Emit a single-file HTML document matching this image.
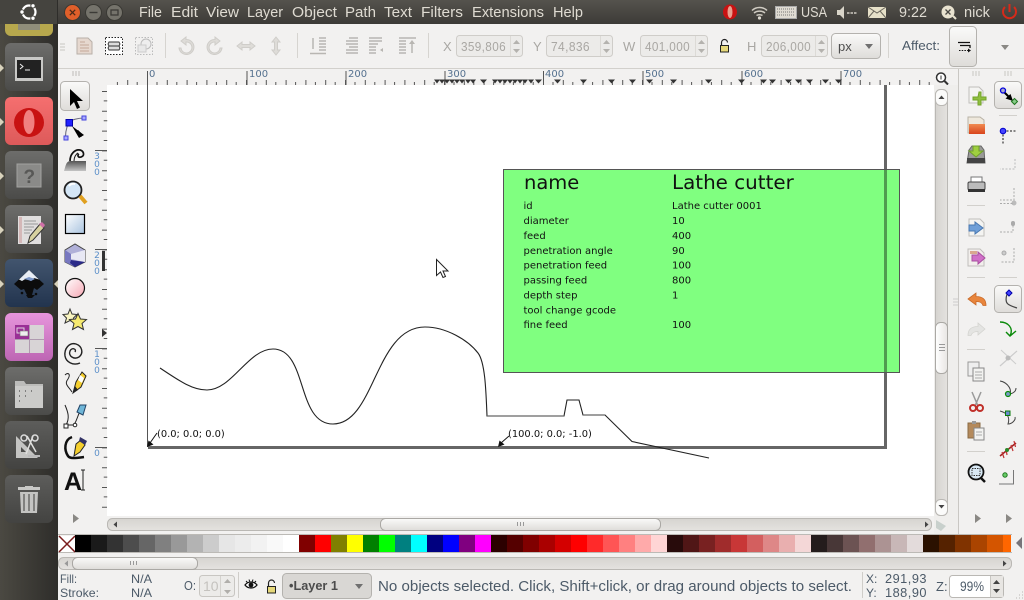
<!DOCTYPE html>
<html><head><meta charset="utf-8"><title>Inkscape</title>
<style>
html,body{margin:0;padding:0;background:#f2f1f0;width:1024px;height:600px;overflow:hidden}
svg{display:block;position:absolute;left:0;top:0}
text{font-family:"Liberation Sans",sans-serif}
.m{fill:#dfdbd2;font-size:15px}
text.d,.d text{font-family:"DejaVu Sans",sans-serif;fill:#111}
.g{fill:#a9a7a3;font-size:13px}
.s{fill:#4c5a68;font-size:14px}
text.r,.r text{fill:#55718f;font-size:10px;font-family:"DejaVu Sans",sans-serif}
text.v,.v text{fill:#5b8fc9;font-size:9px;font-family:"DejaVu Sans",sans-serif;text-anchor:middle}
</style></head><body>
<svg width="1024" height="600" viewBox="0 0 1024 600" xmlns="http://www.w3.org/2000/svg">
<defs>
<linearGradient id="p" x1="0" y1="0" x2="0" y2="1"><stop offset="0" stop-color="#55534d"/><stop offset="1" stop-color="#3c3b37"/></linearGradient>
<linearGradient id="l" x1="0" y1="0" x2="1" y2="0"><stop offset="0" stop-color="#4b4942"/><stop offset="1" stop-color="#2e2d2a"/></linearGradient>
<linearGradient id="t" x1="0" y1="0" x2="0" y2="1"><stop offset="0" stop-color="#6d6d6b"/><stop offset="1" stop-color="#4b4b49"/></linearGradient>
<linearGradient id="t2" x1="0" y1="0" x2="0" y2="1"><stop offset="0" stop-color="#5d5d5b"/><stop offset="1" stop-color="#434341"/></linearGradient>
<linearGradient id="red" x1="0" y1="0" x2="0" y2="1"><stop offset="0" stop-color="#f56f6f"/><stop offset="1" stop-color="#dd5a5a"/></linearGradient>
<linearGradient id="ink" x1="0" y1="0" x2="0" y2="1"><stop offset="0" stop-color="#42556e"/><stop offset="1" stop-color="#22344e"/></linearGradient>
<linearGradient id="pk" x1="0" y1="0" x2="0" y2="1"><stop offset="0" stop-color="#e795dc"/><stop offset="1" stop-color="#bd66b3"/></linearGradient>
<linearGradient id="b" x1="0" y1="0" x2="0" y2="1"><stop offset="0" stop-color="#fafaf9"/><stop offset="1" stop-color="#dedcd9"/></linearGradient>
<linearGradient id="tr" x1="0" y1="0" x2="0" y2="1"><stop offset="0" stop-color="#d6d4d0"/><stop offset="1" stop-color="#e4e2df"/></linearGradient>
<linearGradient id="tv" x1="0" y1="0" x2="1" y2="0"><stop offset="0" stop-color="#d6d4d0"/><stop offset="1" stop-color="#e4e2df"/></linearGradient>
<linearGradient id="th" x1="0" y1="0" x2="1" y2="0"><stop offset="0" stop-color="#fff"/><stop offset="1" stop-color="#e8e6e3"/></linearGradient>
<linearGradient id="rc" x1="0" y1="0" x2="1" y2="1"><stop offset="0" stop-color="#fff"/><stop offset="1" stop-color="#a9c3df"/></linearGradient>
<linearGradient id="ci" x1="0" y1="0" x2="1" y2="1"><stop offset="0" stop-color="#fff"/><stop offset="1" stop-color="#f7a8b4"/></linearGradient>
<linearGradient id="fo" x1="0" y1="0" x2="0" y2="1"><stop offset="0" stop-color="#f08a50"/><stop offset="1" stop-color="#d8441c"/></linearGradient>
<linearGradient id="wv" x1="0" y1="0" x2="0" y2="1"><stop offset="0" stop-color="#555"/><stop offset="1" stop-color="#c4c4c4"/></linearGradient>
</defs>

<!-- app background -->
<rect x="58" y="24" width="966" height="576" fill="#f2f1f0"/>

<!-- canvas -->
<rect x="107" y="85" width="827" height="431" fill="#fff"/>
<!-- page border -->
<path d="M147.500 85V447" stroke="#555" stroke-width="1" fill="none"/>
<path d="M148 447.500H887" stroke="#666" stroke-width="3" fill="none"/>
<path d="M885.500 85V449" stroke="#666" stroke-width="3" fill="none"/>
<!-- green rect -->
<rect x="503.500" y="169.500" width="396" height="203" fill="#80ff80" stroke="#555" stroke-width="1"/>
<path d="M885.500 170V372" stroke="#4f9c4f" stroke-width="3" fill="none"/>
<text class="d" x="524" y="189" font-size="19.500">name</text>
<text class="d" x="672" y="189" font-size="19.900">Lathe cutter</text>
<g class="d" font-size="10">
<text x="523.500" y="209">id</text><text x="672" y="209">Lathe cutter 0001</text>
<text x="523.500" y="224">diameter</text><text x="672" y="224">10</text>
<text x="523.500" y="239">feed</text><text x="672" y="239">400</text>
<text x="523.500" y="254">penetration angle</text><text x="672" y="254">90</text>
<text x="523.500" y="268.500">penetration feed</text><text x="672" y="268.500">100</text>
<text x="523.500" y="283.500">passing feed</text><text x="672" y="283.500">800</text>
<text x="523.500" y="298.500">depth step</text><text x="672" y="298.500">1</text>
<text x="523.500" y="313.500">tool change gcode</text>
<text x="523.500" y="328">fine feed</text><text x="672" y="328">100</text>
</g>
<!-- curve -->
<path d="M160 368C178 380 192 390 207 390C232 390 248 349 273 349C308 349 296 424 333 424C375 424 375 327 425 327C446 327 468 340 478 353C485 362 486 390 487 416L564 416L567 400L579 400L583 415L605 415L632 441.500L709 458" fill="none" stroke="#222" stroke-width="1.100"/>
<path d="M487 416H564M583 415H605" fill="none" stroke="#666" stroke-width="1.300"/>
<!-- labels -->
<text class="d" x="157" y="437" font-size="9.900">(0.0; 0.0; 0.0)</text>
<text class="d" x="508" y="437" font-size="9.900">(100.0; 0.0; -1.0)</text>
<path d="M157 433L150 443" stroke="#111" fill="none"/><path d="M147 447L148.500 440.500L153.500 444.500Z" fill="#111"/>
<path d="M509 436L501 443" stroke="#111" fill="none"/><path d="M498 447L499.500 440.500L504.500 444.500Z" fill="#111"/>
<!-- mouse cursor -->
<path d="M436.500 259.500V275.500L440.500 272L443 277.500L445.500 276.500L443 271H448Z" fill="#fff" stroke="#222" stroke-width="1"/>

<!-- top ruler -->
<rect x="58" y="69" width="876" height="16" fill="#f2f1f0"/>
<path d="M58 68.500H1024" stroke="#d2d0cc"/>
<path d="M107.500 83.500H934" stroke="#555" stroke-width="3" stroke-dasharray="1 18.800" stroke-dashoffset="-9.400" fill="none"/>
<path d="M127.200 82.500H934" stroke="#555" stroke-width="5" stroke-dasharray="1 18.800" fill="none"/>
<path d="M147.500 71V85M247 71V85M346 71V85M445 71V85M543.500 71V85M643 71V85M742 71V85M841 71V85" stroke="#555" fill="none"/>
<g class="r"><text x="149" y="77">0</text><text x="249" y="77">100</text><text x="348" y="77">200</text><text x="447" y="77">300</text><text x="545" y="77">400</text><text x="645" y="77">500</text><text x="744" y="77">600</text><text x="843" y="77">700</text></g>
<path fill="#333" d="M434 79.500h6l-3 4zM439 79.500h6l-3 4zM444 79.500h6l-3 4zM449 79.500h6l-3 4zM454 79.500h6l-3 4zM459 79.500h6l-3 4zM465 79.500h6l-3 4zM470 79.500h6l-3 4zM480 79.500h7l-3.500 4zM492 79.500h6l-3 4zM497 79.500h6l-3 4zM502 79.500h6l-3 4zM507 79.500h6l-3 4zM512 79.500h6l-3 4zM517 79.500h6l-3 4zM522 79.500h6l-3 4zM528 79.500h6l-3 4zM535 79.500h7l-3.500 4zM554 79.500h7l-3.500 4zM580 79.500h7l-3.500 4zM608 79.500h7l-3.500 4zM629 79.500h7l-3.500 4zM646 79.500h7l-3.500 4zM670 79.500h7l-3.500 4zM705 79.500h7l-3.500 4zM738 79.500h7l-3.500 4zM760 79.500h7l-3.500 4zM769 79.500h7l-3.500 4zM785 79.500h7l-3.500 4zM795 79.500h7l-3.500 4zM806 79.500h7l-3.500 4zM822 79.500h7l-3.500 4zM835 79.500h7l-3.500 4z"/>
<!-- magnifier small -->
<circle cx="941" cy="77.500" r="4.500" fill="#fff" stroke="#333" stroke-width="1.500"/><path d="M941 75.500V79.500" stroke="#333"/><path d="M944.500 81L948 84.500" stroke="#333" stroke-width="2"/>

<!-- left ruler -->
<path d="M105 91V516" stroke="#555" stroke-width="3.500" stroke-dasharray="1 18.800" stroke-dashoffset="-9.400" fill="none" transform="translate(0.500 0)"/>
<path d="M104.500 91V516" stroke="#555" stroke-width="5" stroke-dasharray="1 18.800" fill="none"/>
<path d="M95 150.500H107M95 249.500H107M95 348.500H107M95 447.500H107" stroke="#555" fill="none"/>
<g class="v"><text x="97" y="159">3</text><text x="97" y="167">0</text><text x="97" y="175">0</text><text x="97" y="258">2</text><text x="97" y="266">0</text><text x="97" y="274">0</text><text x="97" y="357">1</text><text x="97" y="365">0</text><text x="97" y="373">0</text><text x="97" y="456">0</text></g>
<path d="M102 251h3v20h-3zM102 329l5 4l-5 4z" fill="#333"/>
<rect x="58" y="516" width="49" height="18" fill="#f2f1f0"/>

<!-- left toolbox -->
<path d="M73 71v5M76 71v5M79 71v5" stroke="#bdbbb7"/>
<rect x="60.500" y="81.500" width="29" height="29" rx="4" fill="url(#b)" stroke="#b4b2ae"/>
<path d="M70 89V106L74 102L77 109L80 107.500L77 101H83Z" fill="#000"/>
<!-- node -->
<path d="M69 122C71 120 78 118 84 118M69 122C66 128 65.500 134 65.500 137" fill="none" stroke="#667"/>
<rect x="66" y="119.500" width="6.500" height="6.500" fill="#22f" stroke="#00a"/><rect x="82" y="116" width="4" height="4" fill="#aaf" stroke="#44d"/><rect x="64" y="136" width="4" height="4" fill="#aaf" stroke="#44d"/>
<path d="M72 126L84 135L79 138Z" fill="#000"/><path d="M77 131L82 136" stroke="#000" stroke-width="3"/>
<!-- tweak -->
<path d="M64 171C66 165 66 161 71 161H86V171Z" fill="url(#wv)"/>
<path d="M70 161C70 154 75 149 80 150C84 151 85 156 81 157C78 158 77 155 79 154" fill="none" stroke="#111" stroke-width="1.700"/><path d="M74 161C74 157 76 154 78 153" fill="none" stroke="#111" stroke-width="1"/>
<!-- zoom -->
<circle cx="73" cy="190" r="8.500" fill="#d4e6f6" stroke="#222" stroke-width="1.800"/><path d="M69 186a6 6 0 0 1 6 -2" stroke="#fff" fill="none" stroke-width="2"/><path d="M80 196L86 203" stroke="#e0a020" stroke-width="4"/>
<!-- rect -->
<rect x="65.500" y="214.500" width="19" height="19" fill="url(#rc)" stroke="#000" stroke-width="1.200"/>
<!-- 3d box -->
<path d="M65 250L75 244L85 250V262L75 267L65 262Z" fill="#b0b0d8" stroke="#444"/><path d="M65 250L71 254V263L75 267L65 262Z" fill="#7878c0"/><path d="M71 260L85 262L75 267L70 263Z" fill="#2a2a88"/><path d="M71 254L85 250V262L71 259Z" fill="#e8e8f4"/>
<!-- circle -->
<circle cx="75" cy="288" r="9.500" fill="url(#ci)" stroke="#111" stroke-width="1.200"/>
<!-- star -->
<path d="M70 309L72 314L77 314.500L73.500 318L75 323L70 320.500L65 323L66.500 318L63 314.500L68 314Z" fill="#f8f4c0" stroke="#333"/>
<path d="M78 313.500L80.500 319L86.500 319.500L82 323.500L83.500 329.500L78 326.500L72.500 329.500L74 323.500L69.500 319.500L75.500 319Z" fill="#f6ea70" stroke="#333"/>
<!-- spiral -->
<path d="M75 352C77 349 72 347 70 351C68 356 74 360 79 357C84 353 82 346 76 344C69 342 64 349 65 356C66 362 73 366 80 363" fill="none" stroke="#222" stroke-width="1.400"/>
<!-- pencil -->
<path d="M65 375C68 372 71 374 68 379C64 384 68 386 72 392" fill="none" stroke="#222"/><path d="M73 393L76 382L82 372L86 376L81 387Z" fill="#f5cf2e" stroke="#222"/><path d="M73 393L75 386L78 390Z" fill="#222"/><path d="M80 375L84 378L82 383L78 380Z" fill="#fff"/>
<!-- pen -->
<path d="M65 405C68 412 70 418 66 425M68 425H74C78 418 78 414 80 412" fill="none" stroke="#222"/><rect x="64" y="424" width="4" height="4" fill="#fff" stroke="#222"/><circle cx="75" cy="425" r="1.800" fill="#fff" stroke="#222"/><path d="M77 412L80 405H86L83 415Z" fill="#6fb6d8" stroke="#246"/>
<!-- calligraphy -->
<path d="M72 437C64 440 64 450 68 456C70 459 76 458 84 457" fill="none" stroke="#111" stroke-width="2.500"/><path d="M74 456L76 444L81 440L85 445L80 452Z" fill="#f5cf2e" stroke="#222"/><path d="M80 437L87 441L85 445L79 441Z" fill="#336"/>
<!-- text -->
<text x="64" y="490" font-size="25" font-weight="bold" fill="#111">A</text><path d="M83 470V490M81 470h4M81 490h4" stroke="#222"/>
<path d="M73 514v9l6-4.500z" fill="#8a8884"/>

<!-- right scrollbar -->
<rect x="934" y="85" width="24" height="450" fill="#efeeec"/>
<rect x="935.500" y="89.500" width="12" height="426" rx="5" fill="url(#tv)" stroke="#bab8b4"/>
<rect x="935.500" y="89.500" width="12" height="16" rx="5" fill="#fbfbfa" stroke="#bab8b4"/>
<path d="M938.500 99h6l-3-3.500z" fill="#444"/>
<rect x="935.500" y="499.500" width="12" height="16" rx="5" fill="#fbfbfa" stroke="#bab8b4"/>
<path d="M938.500 505h6l-3 3.500z" fill="#444"/>
<rect x="935.500" y="322.500" width="12" height="51" rx="5" fill="url(#th)" stroke="#aaa8a4"/>
<path d="M939 344.500h6M939 347.500h6M939 350.500h6" stroke="#999"/>
<path d="M953 299h5M953 302h5M953 305h5" stroke="#ccc"/>
<path d="M958.500 69V535" stroke="#c9c7c3"/>

<!-- horizontal scroll -->
<rect x="107.500" y="518.500" width="824" height="12" rx="5" fill="url(#tr)" stroke="#bab8b4"/>
<path d="M117 521.500v6l-3.500-3z" fill="#444"/><path d="M925 521.500v6l3.500-3z" fill="#444"/>
<rect x="380.500" y="518.500" width="280" height="12" rx="5" fill="url(#b)" stroke="#aaa8a4"/>
<path d="M517.500 522v4M520.500 522v4M523.500 522v4" stroke="#999"/>
<path d="M936 520L946 526L941 531L936 528Z" fill="#c8d0cc"/>

<!-- palette -->
<path d="M58 534.500H1012M58 552.500H1012" stroke="#bcbab6"/>
<rect x="59" y="536" width="16" height="16" fill="#fff"/><path d="M59 536L75 552M75 536L59 552" stroke="#7a1c1c" stroke-width="1.500"/>
<g>
<rect x="75" y="535" width="16" height="17" fill="#000"/><rect x="91" y="535" width="16" height="17" fill="#1a1a1a"/><rect x="107" y="535" width="16" height="17" fill="#333"/><rect x="123" y="535" width="16" height="17" fill="#4d4d4d"/><rect x="139" y="535" width="16" height="17" fill="#666"/><rect x="155" y="535" width="16" height="17" fill="#808080"/><rect x="171" y="535" width="16" height="17" fill="#999"/><rect x="187" y="535" width="16" height="17" fill="#b3b3b3"/><rect x="203" y="535" width="16" height="17" fill="#ccc"/><rect x="219" y="535" width="16" height="17" fill="#e6e6e6"/><rect x="235" y="535" width="16" height="17" fill="#ececec"/><rect x="251" y="535" width="16" height="17" fill="#f2f2f2"/><rect x="267" y="535" width="16" height="17" fill="#f9f9f9"/><rect x="283" y="535" width="16" height="17" fill="#fff"/>
<rect x="299" y="535" width="16" height="17" fill="#800000"/><rect x="315" y="535" width="16" height="17" fill="#f00"/><rect x="331" y="535" width="16" height="17" fill="#808000"/><rect x="347" y="535" width="16" height="17" fill="#ff0"/><rect x="363" y="535" width="16" height="17" fill="#008000"/><rect x="379" y="535" width="16" height="17" fill="#0f0"/><rect x="395" y="535" width="16" height="17" fill="#008080"/><rect x="411" y="535" width="16" height="17" fill="#0ff"/><rect x="427" y="535" width="16" height="17" fill="#000080"/><rect x="443" y="535" width="16" height="17" fill="#00f"/><rect x="459" y="535" width="16" height="17" fill="#800080"/><rect x="475" y="535" width="16" height="17" fill="#f0f"/>
<rect x="491" y="535" width="16" height="17" fill="#2b0000"/><rect x="507" y="535" width="16" height="17" fill="#500"/><rect x="523" y="535" width="16" height="17" fill="#800000"/><rect x="539" y="535" width="16" height="17" fill="#a00"/><rect x="555" y="535" width="16" height="17" fill="#d40000"/><rect x="571" y="535" width="16" height="17" fill="#f00"/><rect x="587" y="535" width="16" height="17" fill="#ff2a2a"/><rect x="603" y="535" width="16" height="17" fill="#f55"/><rect x="619" y="535" width="16" height="17" fill="#ff8080"/><rect x="635" y="535" width="16" height="17" fill="#faa"/><rect x="651" y="535" width="16" height="17" fill="#ffd5d5"/>
<rect x="667" y="535" width="16" height="17" fill="#280b0b"/><rect x="683" y="535" width="16" height="17" fill="#501616"/><rect x="699" y="535" width="16" height="17" fill="#782121"/><rect x="715" y="535" width="16" height="17" fill="#a02c2c"/><rect x="731" y="535" width="16" height="17" fill="#c83737"/><rect x="747" y="535" width="16" height="17" fill="#d35f5f"/><rect x="763" y="535" width="16" height="17" fill="#de8787"/><rect x="779" y="535" width="16" height="17" fill="#e9afaf"/><rect x="795" y="535" width="16" height="17" fill="#f4d7d7"/>
<rect x="811" y="535" width="16" height="17" fill="#241c1c"/><rect x="827" y="535" width="16" height="17" fill="#483737"/><rect x="843" y="535" width="16" height="17" fill="#6c5353"/><rect x="859" y="535" width="16" height="17" fill="#916f6f"/><rect x="875" y="535" width="16" height="17" fill="#ac9393"/><rect x="891" y="535" width="16" height="17" fill="#c8b7b7"/><rect x="907" y="535" width="16" height="17" fill="#e3dbdb"/>
<rect x="923" y="535" width="16" height="17" fill="#2b1100"/><rect x="939" y="535" width="16" height="17" fill="#520"/><rect x="955" y="535" width="16" height="17" fill="#803300"/><rect x="971" y="535" width="16" height="17" fill="#a40"/><rect x="987" y="535" width="16" height="17" fill="#d45500"/><rect x="1003" y="535" width="8" height="17" fill="#f60"/>
</g>
<path d="M1022 537v12l-6-6z" fill="#77757a"/>
<!-- palette scroll -->
<rect x="58.500" y="557.500" width="953" height="12" rx="5" fill="url(#tr)" stroke="#bab8b4"/>
<path d="M68 560.500v6l-3.500-3z" fill="#999"/><path d="M1003 560.500v6l3.500-3z" fill="#444"/>
<rect x="72.500" y="557.500" width="125" height="12" rx="5" fill="url(#b)" stroke="#aaa8a4"/>
<path d="M130.500 561v4M133.500 561v4M136.500 561v4" stroke="#999"/>

<!-- status bar -->
<g class="s">
<text x="60" y="583" textLength="17" lengthAdjust="spacingAndGlyphs" style="font-size:12px">Fill:</text>
<text x="60" y="597" textLength="39" lengthAdjust="spacingAndGlyphs" style="font-size:12px">Stroke:</text>
<text x="131" y="583" textLength="21" lengthAdjust="spacingAndGlyphs" style="font-size:12px">N/A</text>
<text x="131" y="597" textLength="21" lengthAdjust="spacingAndGlyphs" style="font-size:12px">N/A</text>
<text x="184" y="590" textLength="12" lengthAdjust="spacingAndGlyphs" style="font-size:13px">O:</text>
</g>
<rect x="199.500" y="575.500" width="35" height="21" rx="3" fill="#ecebe9" stroke="#c8c6c2"/>
<path d="M220.500 576V596" stroke="#d4d2ce"/><text x="203" y="591" style="font-size:14px;fill:#c4c2be">10</text>
<path d="M224 583h7l-3.500-4zM224 590h7l-3.500 4z" fill="#b0aeaa"/>
<path d="M238.500 572V598" stroke="#cfcdc9"/>
<!-- eye -->
<path d="M245 585C248 581 254 581 257 585C254 589 248 589 245 585Z" fill="#fff" stroke="#111" stroke-width="1.300"/><circle cx="251" cy="585" r="2.400" fill="#111"/><path d="M246 581l1.500 1.500M249 579.500l.7 2M253 579.500l-.7 2M256 581l-1.500 1.500" stroke="#111"/>
<!-- lock -->
<rect x="267.500" y="586.500" width="8" height="6.500" fill="#e6d87a" stroke="#222"/><path d="M268.500 586V583a3 3 0 0 1 6 0" fill="none" stroke="#222" stroke-width="1.200"/>
<!-- layer combo -->
<rect x="282.500" y="573.500" width="89" height="25" rx="4" fill="#d9d7d4" stroke="#b4b2ae"/>
<text x="289" y="590" font-weight="bold" fill="#4c4c4c" style="font-size:13px" textLength="49" lengthAdjust="spacingAndGlyphs">•Layer 1</text>
<path d="M355 584h8l-4 5z" fill="#707070"/>
<text x="378" y="591" class="s" style="font-size:14.500px" textLength="474" lengthAdjust="spacingAndGlyphs">No objects selected. Click, Shift+click, or drag around objects to select.</text>
<path d="M862.500 572V598" stroke="#cfcdc9"/>
<g fill="#4c5a68">
<text x="866" y="583" style="font-size:12px">X:</text><text x="866" y="597" style="font-size:12px">Y:</text>
<text x="885" y="583" style="font-size:13px;letter-spacing:.5px" textLength="42" lengthAdjust="spacingAndGlyphs">291,93</text>
<text x="885" y="597" style="font-size:13px;letter-spacing:.5px" textLength="42" lengthAdjust="spacingAndGlyphs">188,90</text>
<text x="936" y="591" style="font-size:13px">Z:</text>
</g>
<rect x="949.500" y="575.500" width="54" height="22" rx="3" fill="#fff" stroke="#bab8b4"/>
<path d="M990 576H1003V597H990Z" fill="#e8e6e3"/><path d="M990.500 576V597" stroke="#c8c6c2"/>
<text x="960" y="591" fill="#4c5a68" style="font-size:13.500px" textLength="24" lengthAdjust="spacingAndGlyphs">99%</text>
<path d="M993 584h7l-3.500-4zM993 589h7l-3.500 4z" fill="#444"/>
<path d="M1022 592h1M1019 595h1M1022 595h1M1016 598h1M1019 598h1M1022 598h1" stroke="#bab8b4"/>

<!-- right toolbox col 1 -->
<path d="M973 71v5M976 71v5M979 71v5M1005 71v5M1008 71v5M1011 71v5" stroke="#c8c6c2"/>
<path d="M969 87H979L983 91V103H969Z" fill="#f4f4f2" stroke="#c0bebb"/><path d="M980 92h2v5h5v3h-5v5h-3v-5h-5v-3h5z" fill="#8fbf3f" stroke="#73a32a" transform="translate(-1 0)"/>
<!-- open -->
<path d="M968 117H980L984 120V133H968Z" fill="#eee8dc" stroke="#b8b2a6"/><rect x="969" y="124" width="16" height="10" fill="url(#fo)"/>
<!-- save -->
<path d="M969 150L972 146H981L984 150L985 163H967Z" fill="#9a9a98" stroke="#666"/><rect x="967" y="158" width="18" height="5" fill="#444"/><path d="M973 146h6v5h4l-7 6l-7-6h4z" fill="#9fcf3f" stroke="#6f9f2a"/>
<!-- print -->
<rect x="971" y="177" width="11" height="6" fill="#fff" stroke="#777"/><rect x="968" y="182" width="17" height="8" rx="1.500" fill="#bbb" stroke="#444"/><rect x="968" y="189" width="17" height="3" fill="#333"/>
<path d="M967 205.500h18M967 277.500h18M967 349.500h18M967 451.500h18" stroke="#d2d0cc"/>
<!-- import -->
<path d="M969 219H980L984 223V236H969Z" fill="#f4f4f2" stroke="#c0bebb"/><path d="M969 225h6v-3l8 6l-8 6v-3h-6z" fill="#6f9fd8" stroke="#4a78b0"/>
<!-- export -->
<path d="M968 249H980L984 253V266H968Z" fill="#f2efec" stroke="#c0bebb"/><rect x="970" y="251" width="7" height="3" fill="#d9a88f"/><path d="M972 255h6v-3l7 6l-7 6v-3h-6z" fill="#d070c8" stroke="#a850a0"/>
<!-- undo -->
<path d="M968 299l8-6v3.500c6 0 10 2 10 9h-3c-1-3-3-4-7-4v3.500z" fill="#e8853c" stroke="#c96a28" stroke-width=".8"/>
<!-- redo -->
<path d="M985 329l-7-6v3.500c-6 0-10 2-10 9h3c1-3 3-4 7-4v3.500z" fill="#e4e4e2" stroke="#d4d4d0" stroke-width=".8"/>
<!-- copy -->
<rect x="968" y="362" width="11" height="14" fill="#eee" stroke="#999"/><rect x="973" y="368" width="11" height="13" fill="#f2f2f0" stroke="#888"/><path d="M975 372h7M975 375h7M975 378h7" stroke="#aaa"/>
<!-- cut -->
<path d="M972 392L978 406M981 392L975 406" stroke="#9a9a9a" stroke-width="1.500"/><circle cx="973" cy="408" r="3" fill="none" stroke="#c0302a" stroke-width="2"/><circle cx="980" cy="408" r="3" fill="none" stroke="#c0302a" stroke-width="2"/>
<!-- paste -->
<rect x="968" y="423" width="12" height="15" fill="#b48a5c" stroke="#8a6a44"/><rect x="972" y="421" width="4" height="3" fill="#999"/><rect x="974" y="428" width="10" height="12" fill="#f2f2f0" stroke="#888"/><path d="M976 432h6M976 435h6" stroke="#aaa"/>
<!-- zoom fit -->
<circle cx="976" cy="472" r="7.500" fill="#d8e8f4" stroke="#111" stroke-width="1.800"/><rect x="972" y="468.500" width="8" height="7" fill="none" stroke="#333" stroke-dasharray="1.500 1"/><path d="M981 478L985 482" stroke="#111" stroke-width="2.500"/>
<path d="M975 514v9l6-4.500z" fill="#8a8884"/><path d="M1006 514v9l6-4.500z" fill="#8a8884"/>

<!-- right toolbox col 2 -->
<rect x="994.500" y="81.500" width="27" height="27" rx="4" fill="url(#b)" stroke="#b4b2ae"/>
<path d="M1004 92L1011 99" stroke="#000" stroke-width="2"/><path d="M1013 101L1005.500 98.500L1010.500 94Z" fill="#000"/>
<circle cx="1003" cy="90.500" r="2.500" fill="#aac" stroke="#00d" stroke-width="1.300"/><path d="M1017.500 101.500l-3 3l-3-3l3-3z" fill="#8c8" stroke="#272" stroke-width="1"/>
<path d="M999 115.500h18M999 277.500h18" stroke="#d2d0cc"/>
<path d="M1003 131h14M1003 131v14" stroke="#444" stroke-width="1.300" stroke-dasharray="2 1.500" fill="none"/><circle cx="1003" cy="131" r="2.800" fill="#44f" stroke="#00c"/>
<path d="M1015 159v10h-15" fill="none" stroke="#bbb" stroke-dasharray="2 1.500"/>
<path d="M1014 188v12h-14" fill="none" stroke="#aaa" stroke-dasharray="2 1.500"/><circle cx="1014" cy="203" r="2.500" fill="#bbb"/><path d="M1000 203.500h14" stroke="#aaa" stroke-dasharray="2 1.500"/>
<path d="M1013 222v10h-14" fill="none" stroke="#aaa" stroke-dasharray="2 1.500"/><rect x="1011" y="221" width="4" height="5" rx="2" fill="#aaa"/>
<path d="M1014 248v14h-14" fill="none" stroke="#aaa" stroke-dasharray="2 1.500"/><circle cx="1004" cy="253" r="2" fill="#ccc" stroke="#aaa"/>
<rect x="994.500" y="285.500" width="27" height="27" rx="4" fill="url(#b)" stroke="#b4b2ae"/>
<path d="M1007 294C1004 304 1008 305 1017 308" fill="none" stroke="#444" stroke-width="1.200"/><path d="M1009 290l3 3l-3 3l-3-3z" fill="#44f" stroke="#00a"/>
<path d="M1000 322C1008 322 1014 328 1010 336M1006 332L1010 336L1016 331" fill="none" stroke="#0a8a0a" stroke-width="1.400"/>
<path d="M1000 366L1017 351" stroke="#ccc" stroke-width="1.200"/><path d="M1001 350L1016 364" stroke="#ccc"/><circle cx="1008" cy="358" r="2.500" fill="#bbb"/>
<path d="M1000 381C1008 382 1014 392 1008 395" fill="none" stroke="#444" stroke-width="1.100"/><path d="M1008 394C1012 394 1016 392 1016 388" fill="none" stroke="#444"/><circle cx="1008" cy="394" r="2.500" fill="#7a9ac8" stroke="#0a8a0a" stroke-width="1.200"/>
<path d="M1000 411C1008 413 1010 418 1008 424C1012 424 1016 420 1015 417" fill="none" stroke="#444"/><rect x="1005.500" y="411" width="4.500" height="4.500" fill="#6a8ad0" stroke="#0a7a0a"/>
<path d="M1000 456L1016 443" stroke="#a02020" stroke-width="1.500"/><path d="M1002 452l2 6M1006 449l1 6M1011 445l2 6M1014 441l1.500 6" stroke="#c03030" stroke-width="1.200"/><circle cx="1007" cy="450" r="2" fill="#2a8a2a"/>
<circle cx="1005" cy="475" r="2.200" fill="#6c6" stroke="#272" stroke-width="1"/><path d="M1013.500 470V484H999" fill="none" stroke="#777"/>

<!-- commands toolbar -->
<path d="M60 44h5M60 47h5M60 50h5" stroke="#c8c6c2"/>
<path d="M77 38H88L92 42V54H77Z" fill="#e6d8cf" stroke="#b8b0a8"/><path d="M80 42h5M80 45h9M80 48h9M80 51h9" stroke="#c4a898"/>
<rect x="105.500" y="37.500" width="17" height="17" fill="#fff" stroke="#222" stroke-dasharray="1.500 1.500"/><path d="M109 42h10l1 2l-1 2h-10l-1-2zM109 46h10l1 2l-1 2h-10l-1-2z" fill="#ddd" stroke="#333" stroke-width=".9"/>
<rect x="135.500" y="37.500" width="17" height="17" fill="none" stroke="#bbb" stroke-dasharray="1.500 1.500"/><circle cx="146" cy="44" r="5" fill="#eee" stroke="#bbb"/><rect x="138" y="45" width="8" height="7" fill="#e8e8e8" stroke="#ccc"/>
<g fill="#dedcd8" stroke="#cfcdc9">
<path d="M186 37L181 41L186 45V42A5.500 5.500 0 1 1 181 48H179A7.500 7.500 0 1 0 186 39.500Z"/>
<path d="M215 37L220 41L215 45V42A5.500 5.500 0 1 0 220 48H222A7.500 7.500 0 1 1 215 39.500Z"/>
<path d="M237 46l5-4v2.500h8V42l5 4l-5 4v-2.500h-8V50z"/>
<path d="M276 37l4 5h-2.500v8h2.500l-4 5l-4-5h2.500v-8H272z"/>
</g>
<path d="M165.500 33V58M297.500 33V58M428.500 33V58M888.500 33V58" stroke="#d6d4d0"/>
<g stroke="#b8b6b2" stroke-width="1.500" fill="none">
<path d="M310 53.500H326"/><path d="M319 38h7M319 41h7M319 44h7M319 47h7M319 50h7"/><path d="M313 38V49"/>
<path d="M349 38h9M346 41h12M346 44h12M349 47h9M346 50h12M346 53h12"/>
<path d="M369 38h13M369 41h13M369 44h9M369 47h7M369 50h7M369 53h7"/>
<path d="M399 38h17M399 41h7M399 44h7M399 47h7M399 50h7M399 53h7"/><path d="M412 53V42"/>
</g>
<path d="M412 40l-3 4h6zM383 48l-3 2l3 2z" fill="#b8b6b2"/>
<text x="443" y="51" class="g">X</text><text x="533" y="51" class="g">Y</text><text x="623" y="51" class="g">W</text><text x="747" y="51" class="g">H</text>
<g fill="#ecebe9" stroke="#cfcdc9">
<rect x="456.500" y="35.500" width="66" height="21" rx="3"/><rect x="546.500" y="35.500" width="66" height="21" rx="3"/><rect x="640.500" y="35.500" width="67" height="21" rx="3"/><rect x="761.500" y="35.500" width="66" height="21" rx="3"/>
</g>
<path d="M510.500 36V56M600.500 36V56M695.500 36V56M815.500 36V56" stroke="#dcdad6"/>
<path d="M513 44h7l-3.500-4zM513 49h7l-3.500 4zM603 44h7l-3.500-4zM603 49h7l-3.500 4zM698 44h7l-3.500-4zM698 49h7l-3.500 4zM818 44h7l-3.500-4zM818 49h7l-3.500 4z" fill="#b4b2ae"/>
<g style="letter-spacing:.4px">
<text class="g" x="461" y="51" textLength="45" lengthAdjust="spacingAndGlyphs">359,806</text>
<text class="g" x="551" y="51" textLength="39" lengthAdjust="spacingAndGlyphs">74,836</text>
<text class="g" x="645" y="51" textLength="45" lengthAdjust="spacingAndGlyphs">401,000</text>
<text class="g" x="766" y="51" textLength="45" lengthAdjust="spacingAndGlyphs">206,000</text>
</g>
<rect x="720.500" y="45.500" width="8" height="6.500" fill="#e6d87a" stroke="#222"/><path d="M721.500 45V42.500a3 3 0 0 1 6 0" fill="none" stroke="#222" stroke-width="1.200"/>
<rect x="831.500" y="33.500" width="49" height="25" rx="4" fill="url(#b)" stroke="#b4b2ae"/>
<text x="838" y="51" fill="#4c4c4c" style="font-size:13px">px</text><path d="M865 44h8l-4 5z" fill="#707070"/>
<text x="902" y="50" fill="#4c5a68" style="font-size:13px" textLength="38" lengthAdjust="spacingAndGlyphs">Affect:</text>
<rect x="949.500" y="26.500" width="27" height="40" rx="4" fill="url(#b)" stroke="#b4b2ae"/>
<path d="M958 42.500H970M960 45.500H970V48" stroke="#111" stroke-width="1.300" fill="none"/><path d="M959 50.500H968" stroke="#111" stroke-dasharray="1.500 1.200"/><path d="M968 48.500l3 2l-3 2z" fill="#111"/>
<path d="M1001 45h8l-4 5z" fill="#8a8884"/>

<!-- launcher -->
<rect x="0" y="0" width="58" height="600" fill="url(#l)"/>
<rect x="5" y="-12" width="48" height="48" rx="6" fill="#b7a84d"/>
<rect x="18" y="24" width="22" height="6" fill="#8f8d7a"/>
<rect x="5" y="43" width="48" height="48" rx="6" fill="url(#t)"/>
<rect x="5" y="97" width="48" height="48" rx="6" fill="url(#red)"/>
<rect x="5" y="151" width="48" height="48" rx="6" fill="url(#t)"/>
<rect x="5" y="205" width="48" height="48" rx="6" fill="url(#t)"/>
<rect x="5" y="259" width="48" height="48" rx="6" fill="url(#ink)"/>
<rect x="5" y="313" width="48" height="48" rx="6" fill="url(#pk)"/>
<rect x="5" y="367" width="48" height="48" rx="6" fill="url(#t)"/>
<rect x="5" y="421" width="48" height="48" rx="6" fill="url(#t2)"/>
<rect x="5" y="475" width="48" height="48" rx="6" fill="url(#t2)"/>
<!-- pips -->
<path d="M0 64l4 4l-4 4zM0 118l4 4l-4 4zM0 172l4 4l-4 4zM0 226l4 4l-4 4zM0 280l4 4l-4 4zM58 280l-4 4l4 4z" fill="#d8d2bc"/>
<!-- terminal -->
<rect x="15" y="57" width="28" height="24" fill="#c8c8c6"/><rect x="17" y="60" width="24" height="18" fill="#222"/><path d="M20 64l3 2.500l-3 2.500M25 70h5" stroke="#eee" fill="none"/>
<!-- opera -->
<ellipse cx="29" cy="122.500" rx="15" ry="14.500" fill="#c81212"/><ellipse cx="29" cy="122" rx="5.500" ry="12" fill="#f08080"/>
<!-- help -->
<rect x="17" y="164" width="24" height="23" fill="#8a8a88" stroke="#a2a2a0"/><text x="23.500" y="183" font-size="19" font-weight="bold" fill="#585856">?</text>
<!-- editor -->
<rect x="18" y="216" width="23" height="28" fill="#e0dede"/><path d="M19 217h3v26h-3z" fill="#d4b8b8"/><path d="M24 221h12M24 224h14M24 227h10M24 230h8M24 233h6" stroke="#999"/><path d="M28 243L30 236L40 224L44 228L33 240Z" fill="#d8d2a0" stroke="#333"/><path d="M39 224l3-2l3 3l-2 3z" fill="#d070a8"/>
<!-- inkscape -->
<path d="M29 270L44 284L37 290L34 288L32 295H27L24 289L21 290L14 284Z" fill="#0c0c0c"/><path d="M29 270L39 279.500L34 278L31 281L27 278L22 281L19 279.500Z" fill="#e8eef6"/><path d="M24 279l5-2l6 2l-4 2l-3-1z" fill="#7a96c8"/><circle cx="22" cy="293" r="1.300" fill="#0c0c0c"/><circle cx="36" cy="294" r="1.300" fill="#0c0c0c"/><path d="M26 295h9l-3 3h-4z" fill="#0c0c0c"/>
<!-- workspaces -->
<rect x="15" y="325" width="29" height="28" fill="#d8d4d6"/><path d="M29.500 325V353M15 339.500H44" stroke="#b09ab0"/><rect x="15" y="325" width="14" height="14" fill="#9a2f96"/><rect x="17" y="328" width="7" height="5" fill="none" stroke="#e0d0e0"/><rect x="20" y="331" width="8" height="5" fill="#eee" stroke="#777" stroke-width=".6"/>
<!-- files -->
<path d="M15 381H24L26 384H43V408H15Z" fill="#bcbcba"/><rect x="15" y="386" width="28" height="22" fill="#cbcbc9"/><path d="M19 391h1M25 391h1M31 391h1M19 396h1M25 396h1M19 401h1" stroke="#666" stroke-width="1.500"/>
<!-- scissors/tools -->
<path d="M16 458V436L38 458Z" fill="#c4c4c2"/><path d="M21 452V447L26 452Z" fill="#4e4e4c"/><path d="M33 436L26 454M27 436L36 452" stroke="#e0e0de" stroke-width="1.500"/><circle cx="35" cy="438" r="3" fill="none" stroke="#ddd" stroke-width="1.500"/><circle cx="24" cy="438" r="3" fill="none" stroke="#ddd" stroke-width="1.500"/><path d="M28 456h12" stroke="#bbb" stroke-width="2"/>
<!-- trash -->
<rect x="18" y="487" width="22" height="3" fill="#c8c8c6"/><rect x="25" y="486" width="8" height="2" fill="#c8c8c6"/><path d="M20 492H38L37 513H21Z" fill="#c4c4c2"/><path d="M24 494V511M29 494V511M34 494V511" stroke="#6a6a68" stroke-width="1.500"/>

<!-- top panel -->
<rect x="0" y="0" width="1024" height="24" fill="url(#p)"/>
<rect x="0" y="0" width="58" height="24" fill="#45443f"/>
<path d="M57.500 0V24" stroke="#2e2d2a"/>
<circle cx="29" cy="12" r="6.500" fill="none" stroke="#fff" stroke-width="2.200"/><circle cx="22" cy="12" r="2.200" fill="#fff" stroke="#45443f"/><circle cx="33" cy="5.800" r="2.200" fill="#fff" stroke="#45443f"/><circle cx="33" cy="18.200" r="2.200" fill="#fff" stroke="#45443f"/>
<!-- window buttons -->
<circle cx="72.500" cy="12.500" r="8" fill="#e05f2a" stroke="#3a3934"/><path d="M69.800 9.800L75.200 15.200M75.200 9.800L69.800 15.200" stroke="#4a2a18" stroke-width="1.300"/>
<circle cx="93.500" cy="12.500" r="8" fill="#75736b" stroke="#3a3934"/><path d="M89.500 12.500H97.500" stroke="#3c3b37" stroke-width="1.400"/>
<circle cx="114.500" cy="12.500" r="8" fill="#75736b" stroke="#3a3934"/><rect x="111" y="10" width="7" height="5" fill="none" stroke="#3c3b37" stroke-width="1.300"/>
<!-- menu -->
<text class="m" x="139" y="17" textLength="23" lengthAdjust="spacingAndGlyphs">File</text>
<text class="m" x="171" y="17" textLength="27" lengthAdjust="spacingAndGlyphs">Edit</text>
<text class="m" x="206" y="17" textLength="33" lengthAdjust="spacingAndGlyphs">View</text>
<text class="m" x="247" y="17" textLength="36" lengthAdjust="spacingAndGlyphs">Layer</text>
<text class="m" x="292" y="17" textLength="45" lengthAdjust="spacingAndGlyphs">Object</text>
<text class="m" x="345" y="17" textLength="31" lengthAdjust="spacingAndGlyphs">Path</text>
<text class="m" x="384" y="17" textLength="28" lengthAdjust="spacingAndGlyphs">Text</text>
<text class="m" x="421" y="17" textLength="42" lengthAdjust="spacingAndGlyphs">Filters</text>
<text class="m" x="472" y="17" textLength="72" lengthAdjust="spacingAndGlyphs">Extensions</text>
<text class="m" x="553" y="17" textLength="30" lengthAdjust="spacingAndGlyphs">Help</text>
<!-- indicators -->
<ellipse cx="730" cy="12" rx="7" ry="7.500" fill="#c81212"/><ellipse cx="730" cy="12" rx="2.500" ry="6" fill="#e8a090"/>
<path d="M752 10.500C756 6.500 763 6.500 767 10.500M754 13C757 10.500 762 10.500 765 13M756.500 15.500C758 14.500 761 14.500 762.500 15.500" fill="none" stroke="#cfcbc2" stroke-width="1.500"/><circle cx="759.500" cy="18" r="1.600" fill="#dfdbd2"/>
<rect x="775.500" y="6.500" width="21" height="12" fill="#dfdbd2" stroke="#aaa"/><path d="M777 9h17M777 12h17M777 15h17" stroke="#777" stroke-dasharray="1 1"/>
<text class="m" x="801" y="17" textLength="26" lengthAdjust="spacingAndGlyphs">USA</text>
<path d="M837 10h3l4-4V19l-4-4h-3z" fill="#d8d4c8"/><path d="M847 13h10" stroke="#cfcbc2" stroke-width="1.500" stroke-dasharray="2.500 1"/>
<rect x="868" y="7" width="18" height="11" fill="#e6e0c8"/><path d="M868 7L877 13L886 7M868 18L874 11M886 18L880 11" stroke="#6a665c" fill="none"/>
<text class="m" x="899" y="17" textLength="28" lengthAdjust="spacingAndGlyphs">9:22</text>
<circle cx="948" cy="12" r="6.500" fill="#e8e2cf"/><path d="M945.500 9.500l5 5M950.500 9.500l-5 5" stroke="#4a4843" stroke-width="1.300"/><path d="M953 16l3 3" stroke="#e8e2cf" stroke-width="2"/>
<text class="m" x="964" y="17" textLength="26" lengthAdjust="spacingAndGlyphs">nick</text>
<path d="M1005 7A6.500 6.500 0 1 0 1014 7" fill="none" stroke="#d62a1a" stroke-width="2"/><path d="M1009.500 4V12" stroke="#d62a1a" stroke-width="2"/>
</svg>
</body></html>
